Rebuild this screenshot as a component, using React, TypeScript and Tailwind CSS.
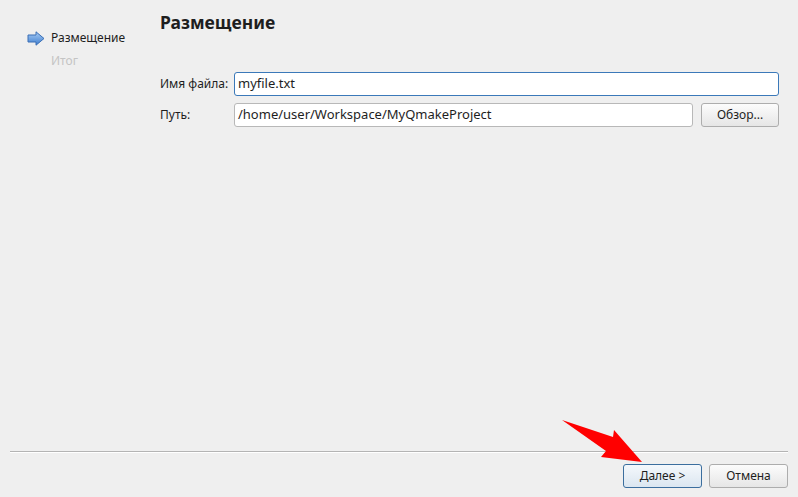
import React from 'react';

const font = { fontFamily: '"Noto Sans", "Open Sans", sans-serif' };

const StepArrow = () => (
  <svg width="18" height="15" viewBox="0 0 18 15">
    <defs>
      <linearGradient id="ag" x1="0" y1="0" x2="0" y2="1">
        <stop offset="0" stopColor="#a9cdf5" />
        <stop offset="1" stopColor="#3d7dcf" />
      </linearGradient>
    </defs>
    <path d="M1 4 H9 V0.8 L17 7.5 L9 14.2 V11 H1 Z" fill="url(#ag)" stroke="#3a6fb5" strokeWidth="1" strokeLinejoin="round" />
  </svg>
);

const App: React.FC = () => {
  return (
    <div className="relative w-[798px] h-[497px] bg-[#efefef] flex flex-col text-[#1e1e1e] overflow-hidden" style={font}>
      <div className="flex flex-1">
        {/* Шаги мастера */}
        <div className="w-[160px] pl-[27px] pt-[30px] flex flex-col gap-[6px] text-[12px]">
          <div className="flex items-center gap-[6px] h-[16px]">
            <StepArrow />
            <span>Размещение</span>
          </div>
          <div className="pl-[24px] h-[16px] text-[#c4c4c4]">Итог</div>
        </div>

        {/* Страница */}
        <div className="flex-1 pr-[19px] pt-[9px]">
          <h1 className="text-[17.5px] font-bold leading-[26px] h-[26px]">Размещение</h1>
          <div className="mt-[37px] flex flex-col gap-[7px] text-[12px]">
            <div className="flex items-center h-[24px]">
              <label className="w-[74px]">Имя файла:</label>
              <div className="flex-1 h-[24px] bg-white border border-[#3b79b9] rounded-[3px] px-[3px] flex items-center text-[13px]">
                myfile.txt
              </div>
            </div>
            <div className="flex items-center h-[24px]">
              <label className="w-[74px]">Путь:</label>
              <div className="flex-1 h-[24px] bg-white border border-[#b8b8b8] rounded-[3px] px-[3px] flex items-center text-[13px]">
                /home/user/Workspace/MyQmakeProject
              </div>
              <button className="ml-[8px] w-[78px] h-[24px] border border-[#adadad] rounded-[3px] bg-gradient-to-b from-[#fcfcfc] to-[#e6e6e6] text-[12px]">
                Обзор...
              </button>
            </div>
          </div>
        </div>
      </div>

      {/* Нижняя панель */}
      <div className="px-[10px]">
        <div className="h-[1px] bg-[#b4b4b4]" />
        <div className="h-[1px] bg-white" />
      </div>
      <div className="flex justify-end gap-[7px] pt-[11px] pb-[9px] pr-[10px] text-[12px]">
        <button className="w-[79px] h-[24px] border border-[#3b6e9e] rounded-[3px] bg-gradient-to-b from-[#f4f8fc] to-[#dbe6f0]">
          <span className="underline">Д</span>алее &gt;
        </button>
        <button className="w-[79px] h-[24px] border border-[#adadad] rounded-[3px] bg-gradient-to-b from-[#fcfcfc] to-[#e6e6e6]">
          Отмена
        </button>
      </div>

      {/* Красная стрелка-указатель */}
      <svg className="absolute left-0 top-0 pointer-events-none" width="798" height="497">
        <path d="M562 420 L613 437 L614 430 L642 462 L601 457 L606 451 Z" fill="#ff0000" />
      </svg>
    </div>
  );
};

export default App;
